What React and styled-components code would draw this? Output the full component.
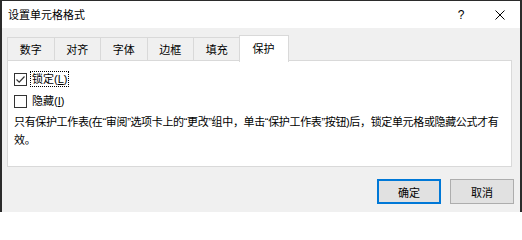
import React from 'react';
import styled, { createGlobalStyle } from 'styled-components';

const GlobalStyle = createGlobalStyle`
  html, body {
    margin: 0;
    padding: 0;
    background: #ffffff;
  }
  * {
    box-sizing: border-box;
  }
`;

const Window = styled.div`
  width: 522px;
  height: 212px;
  display: flex;
  flex-direction: column;
  border-top: 1px solid #2b2b2b;
  border-left: 2px solid #2b2b2b;
  border-right: 2px solid #2b2b2b;
  background: #f0f0f0;
  font-family: "Liberation Sans", "Noto Sans CJK SC", sans-serif;
  font-size: 11px;
  color: #000;
`;

const TitleBar = styled.div`
  height: 27px;
  flex: none;
  display: flex;
  align-items: center;
  background: #ffffff;
  padding-left: 6px;
`;

const Title = styled.div`
  flex: 1;
  font-size: 11px;
  line-height: 14px;
`;

const TitleButton = styled.div`
  width: ${p => p.$w}px;
  height: 27px;
  display: flex;
  align-items: center;
  justify-content: center;
  font-family: "Liberation Sans", sans-serif;
  font-size: 12px;
`;

const Body = styled.div`
  flex: 1;
  display: flex;
  flex-direction: column;
  padding: 7px 8px 0 5px;
`;

const Tabs = styled.div`
  height: 26px;
  display: flex;
  align-items: flex-end;
`;

const Tab = styled.div`
  flex: none;
  width: ${p => (p.$active ? 50 : 47.5)}px;
  height: ${p => (p.$active ? 27 : 24)}px;
  margin: ${p => (p.$active ? '0 0 -1px -2px' : '0 0 0 -1px')};
  &:first-child {
    margin-left: 0;
  }
  position: relative;
  z-index: ${p => (p.$active ? 2 : 1)};
  display: flex;
  align-items: center;
  justify-content: center;
  padding-top: ${p => (p.$active ? 0 : 1)}px;
  border: 1px solid #d9d9d9;
  border-bottom: ${p => (p.$active ? 'none' : '1px solid #d9d9d9')};
  background: ${p => (p.$active ? '#ffffff' : '#f0f0f0')};
  line-height: 14px;
`;

const Panel = styled.div`
  height: 107px;
  margin-top: -1px;
  background: #ffffff;
  border: 1px solid #d9d9d9;
  padding: 7px 2px 0 6px;
  display: flex;
  flex-direction: column;
`;

const CheckRow = styled.div`
  height: 22px;
  display: flex;
  align-items: center;
  gap: 3px;
`;

const Box = styled.div`
  width: 13px;
  height: 13px;
  border: 1px solid #333333;
  background: #ffffff;
  display: flex;
  align-items: center;
  justify-content: center;
`;

const Label = styled.span`
  line-height: 14px;
  padding: 0 1px;
  border: 1px dotted ${p => (p.$focus ? '#000000' : 'transparent')};
  u {
    text-decoration: underline;
  }
`;

const Note = styled.div`
  margin-top: 1px;
  line-height: 18px;
  letter-spacing: -0.35px;
`;

const Footer = styled.div`
  flex: 1;
  display: flex;
  justify-content: flex-end;
  align-items: flex-start;
  gap: 9px;
  padding-top: 12px;
  margin-right: -2px;
`;

const Button = styled.button`
  width: 64px;
  height: 25px;
  font-family: "Liberation Sans", "Noto Sans CJK SC", sans-serif;
  font-size: 11px;
  color: #000;
  background: #e1e1e1;
  border: 1px solid ${p => (p.$primary ? '#0078d7' : '#adadad')};
  box-shadow: ${p => (p.$primary ? 'inset 0 0 0 1px #0078d7' : 'none')};
  padding: 0;
`;

const Check = () => (
  <svg width="11" height="11" viewBox="0 0 11 11">
    <path d="M1.5 5.5 L4.2 8.2 L9.5 2.5" fill="none" stroke="#333" strokeWidth="1.2" />
  </svg>
);

const CloseIcon = () => (
  <svg width="10" height="10" viewBox="0 0 10 10">
    <path d="M0.5 0.5 L9.5 9.5 M9.5 0.5 L0.5 9.5" stroke="#000" strokeWidth="1" />
  </svg>
);

const tabs = ['数字', '对齐', '字体', '边框', '填充', '保护'];

export default function App() {
  return (
    <Window>
      <GlobalStyle />
      <TitleBar>
        <Title>设置单元格格式</Title>
        <TitleButton $w={38}>?</TitleButton>
        <TitleButton $w={40}>
          <CloseIcon />
        </TitleButton>
      </TitleBar>
      <Body>
        <Tabs>
          {tabs.map(t => (
            <Tab key={t} $active={t === '保护'}>{t}</Tab>
          ))}
        </Tabs>
        <Panel>
          <CheckRow>
            <Box><Check /></Box>
            <Label $focus>锁定(<u>L</u>)</Label>
          </CheckRow>
          <CheckRow>
            <Box />
            <Label>隐藏(<u>I</u>)</Label>
          </CheckRow>
          <Note>
            只有保护工作表(在“审阅”选项卡上的“更改”组中，单击“保护工作表”按钮)后，锁定单元格或隐藏公式才有效。
          </Note>
        </Panel>
        <Footer>
          <Button $primary>确定</Button>
          <Button>取消</Button>
        </Footer>
      </Body>
    </Window>
  );
}
